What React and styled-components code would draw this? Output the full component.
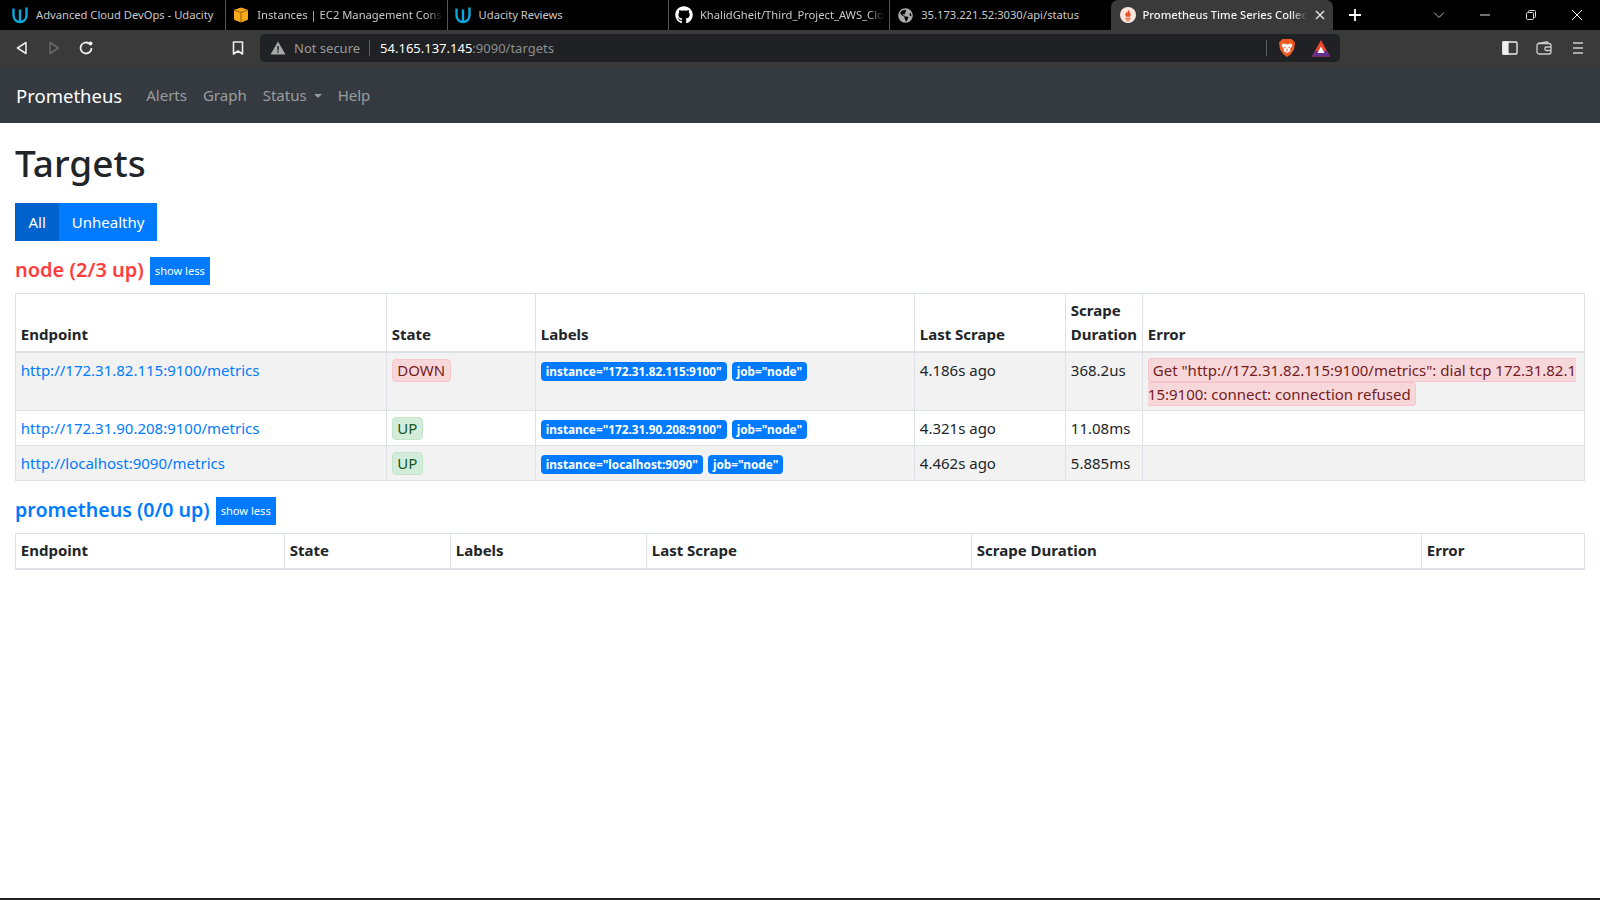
import React from "react";
import styled, { createGlobalStyle } from "styled-components";
import { FaGithub, FaGlobeAmericas } from "react-icons/fa";

const UI_FONT = '"Noto Sans", "Open Sans", sans-serif';

const GlobalStyle = createGlobalStyle`
  html, body {
    margin: 0;
    padding: 0;
    background: #fff;
  }
  body {
    font-family: ${UI_FONT};
    font-size: 15px;
    line-height: 24px;
    color: #212529;
  }
  * {
    box-sizing: border-box;
  }
`;

const Page = styled.div`
  width: 1600px;
  height: 900px;
  display: flex;
  flex-direction: column;
  overflow: hidden;
`;

/* browser chrome */

const TabStrip = styled.div`
  height: 30px;
  flex: none;
  background: #000;
  display: flex;
  align-items: stretch;
  padding-left: 5px;
`;

const Tab = styled.div`
  width: 221.3px;
  flex: none;
  display: flex;
  align-items: center;
  gap: ${({ $active }) => ($active ? "5px" : "7px")};
  padding: 0 ${({ $active }) => ($active ? "7px" : "4px")} 0 ${({ $active }) => ($active ? "8px" : "6px")};
  background: ${({ $active }) => ($active ? "#3a3a3a" : "transparent")};
  border-radius: ${({ $active }) => ($active ? "7px 7px 0 0" : "0")};
  border-right: ${({ $sep }) => ($sep ? "1px solid #555" : "1px solid transparent")};
  color: ${({ $active }) => ($active ? "#f2f2f2" : "#c9c9c9")};
  font-weight: ${({ $active }) => ($active ? 500 : 400)};
`;

const TabIcon = styled.span`
  width: 18px;
  height: 18px;
  flex: none;
  display: flex;
  align-items: center;
  justify-content: center;
`;

const TabTitle = styled.span`
  flex: 1;
  min-width: 0;
  font-size: 11.2px;
  line-height: 16px;
  white-space: nowrap;
  overflow: hidden;
  ${({ $fade }) =>
    $fade
      ? "mask-image: linear-gradient(to right, #000 calc(100% - 16px), transparent);"
      : ""}
`;

const TabClose = styled.svg`
  width: 10px;
  height: 10px;
  flex: none;
  margin-left: 3px;
`;

const NewTab = styled.svg`
  width: 14px;
  height: 14px;
  flex: none;
  margin: 8px 0 0 15px;
`;

const WindowControls = styled.div`
  margin-left: auto;
  display: flex;
  align-items: center;
  padding-right: 16px;
  gap: 32px;
`;

const WindowIcon = styled.svg`
  width: 14px;
  height: 14px;
  display: block;
`;

const Toolbar = styled.div`
  height: 37px;
  flex: none;
  background: #3a3a3a;
  display: flex;
  align-items: center;
  padding: 0 14px 1px 14px;
`;

const ToolIcon = styled.svg`
  width: 16px;
  height: 16px;
  flex: none;
  margin-right: ${({ $gap }) => $gap || 0}px;
`;

const AddressBar = styled.div`
  width: 1080px;
  height: 28px;
  flex: none;
  margin: 0 162px 0 14px;
  background: #202124;
  border-radius: 5px;
  display: flex;
  align-items: center;
  padding: 0 10px;
  font-size: 13px;
  line-height: 16px;
`;

const NotSecure = styled.span`
  color: #9a9a9a;
  margin-left: 8px;
  white-space: nowrap;
`;

const BarSep = styled.span`
  width: 1px;
  height: 16px;
  background: #5f5f5f;
  flex: none;
  margin: ${({ $margin }) => $margin};
`;

const Url = styled.span`
  color: #8e8e8e;
  white-space: nowrap;
  b {
    color: #fff;
    font-weight: 400;
  }
`;

const Shield = styled.svg`
  width: 18px;
  height: 20px;
  flex: none;
  margin-left: 11px;
`;

const Bat = styled.svg`
  width: 18px;
  height: 17px;
  flex: none;
  margin-left: 16px;
`;

/* prometheus navbar */

const Navbar = styled.nav`
  height: 56px;
  flex: none;
  background: #343a40;
  display: flex;
  align-items: center;
  padding: 0 16px;
`;

const Brand = styled.a`
  color: #fff;
  font-size: 18.5px;
  line-height: 30px;
  padding-top: 2px;
  margin-right: 16px;
`;

const NavLink = styled.a`
  color: rgba(255, 255, 255, 0.5);
  padding: 0 8px;
  white-space: nowrap;
`;

const Caret = styled.span`
  display: inline-block;
  margin-left: 7px;
  vertical-align: 3px;
  border-top: 4.8px solid;
  border-left: 4.8px solid transparent;
  border-right: 4.8px solid transparent;
`;

/* page */

const Content = styled.main`
  flex: 1;
  padding: 16px 15px 0;
  background: #fff;
`;

const BottomEdge = styled.div`
  height: 2px;
  flex: none;
  background: #202020;
`;

const Title = styled.h1`
  margin: 0 0 16px;
  font-size: 37px;
  line-height: 48px;
  font-weight: 500;
`;

const FilterGroup = styled.div`
  display: inline-flex;
  vertical-align: top;
`;

const FilterButton = styled.button`
  height: 38px;
  padding: 0 ${({ $active }) => ($active ? "13.5px" : "12.5px")};
  border: 0;
  color: #fff;
  font: inherit;
  background: ${({ $active }) => ($active ? "#0062cc" : "#007bff")};
`;

const PoolHeading = styled.div`
  display: flex;
  align-items: center;
  height: 28px;
  margin: 16px 0 8px;
`;

const PoolName = styled.a`
  color: ${({ $bad }) => ($bad ? "#ff3c3c" : "#007bff")};
  font-size: ${({ $bad }) => ($bad ? "20px" : "19.6px")};
  line-height: 26px;
  font-weight: 600;
  margin-right: 6px;
  padding-bottom: 2px;
`;

const SmallButton = styled.button`
  height: 28px;
  padding: 0 5px;
  border: 0;
  background: #007bff;
  color: #fff;
  font: inherit;
  font-size: 11.1px;
  line-height: 18px;
`;

const Table = styled.table`
  width: 1569px;
  table-layout: fixed;
  border-collapse: collapse;
`;

const Th = styled.th`
  padding: 3.8px 4.8px ${({ $single }) => ($single ? "5.8px" : "4.8px")};
  border: 1px solid #dee2e6;
  border-bottom: 2px solid #dee2e6;
  vertical-align: bottom;
  text-align: left;
  font-weight: 700;
`;

const Row = styled.tr`
  background: ${({ $odd }) => ($odd ? "#f2f2f2" : "#fff")};
`;

const Td = styled.td`
  padding: 5px 4.8px 4.8px;
  border: 1px solid #dee2e6;
  vertical-align: top;
`;

const Endpoint = styled.a`
  color: #007bff;
`;

const StateBadge = styled.span`
  display: inline-block;
  padding: 0 4.5px;
  line-height: 21px;
  border-radius: 4px;
  border: 1px solid ${({ $up }) => ($up ? "#c3e6cb" : "#f5c6cb")};
  background: ${({ $up }) => ($up ? "#d4edda" : "#f8d7da")};
  color: ${({ $up }) => ($up ? "#155724" : "#721c24")};
`;

const LabelList = styled.div`
  display: flex;
  gap: 5px;
  padding-top: 4px;
`;

const Label = styled.span`
  background: #007bff;
  color: #fff;
  font-size: 11.8px;
  font-weight: 700;
  line-height: 13px;
  padding: 3px 5px;
  border-radius: 4px;
  white-space: nowrap;
`;

const ErrorText = styled.span`
  background: #f8d7da;
  color: #721c24;
  border: 1px solid #f5c6cb;
  border-radius: 4px;
  padding: 1px 4px;
  white-space: nowrap;
`;

const UdacityIcon = () => (
  <svg width="18" height="18" viewBox="0 0 18 18" fill="none" stroke="#0aa8dc" strokeWidth="2.4">
    <path d="M2.5 2.500v7a6.500 6.500 0 0 0 13 0V1.500" />
    <path d="M9 3.500v11.500" />
  </svg>
);

const BoxIcon = () => (
  <svg width="18" height="18" viewBox="0 0 18 18">
    <path d="M9 2 15.500 4.200 V13.500 L9 16 2.500 13.500 V4.200z" fill="#f7a81b" stroke="#f7a81b" strokeWidth="1" strokeLinejoin="round" />
    <path d="M2.500 4.200 9 6.400l6.500-2.200M9 6.400V16" fill="none" stroke="#8a5a10" strokeWidth="0.9" />
  </svg>
);

const PrometheusIcon = () => (
  <svg width="16" height="16" viewBox="0 0 18 18">
    <circle cx="9" cy="9" r="9" fill="#fbe6dd" />
    <path d="M9 2.500c.5 2 3 3 3 6 0 1-.4 2-.8 2.600H6.800C6.400 10.500 6 9.500 6 8.500c0-1.500 1-2 1.300-3.200.6.500.8 1 1 1.500C8.800 5.500 9.200 4 9 2.500z" fill="#e6522c" />
    <path d="M6 12h6v1.200H6zM6.500 14h5l-1 1.500h-3z" fill="#e6522c" />
  </svg>
);

const Chevron = () => (
  <WindowIcon viewBox="0 0 14 14" fill="none" stroke="#bbb" strokeWidth="1">
    <path d="M2 4.500 7 9.500l5-5" />
  </WindowIcon>
);

const Minimize = () => (
  <WindowIcon viewBox="0 0 14 14" fill="none" stroke="#ddd" strokeWidth="1">
    <path d="M2 7h10" />
  </WindowIcon>
);

const Restore = () => (
  <WindowIcon viewBox="0 0 14 14" fill="none" stroke="#ddd" strokeWidth="1">
    <rect x="2.500" y="4.500" width="7" height="7" rx="1" />
    <path d="M4.500 4.500V3.500a1 1 0 0 1 1-1h5a1 1 0 0 1 1 1v5a1 1 0 0 1-1 1h-1" />
  </WindowIcon>
);

const CloseWindow = () => (
  <WindowIcon viewBox="0 0 14 14" fill="none" stroke="#eee" strokeWidth="1">
    <path d="m2 2 10 10M12 2 2 12" />
  </WindowIcon>
);

const tabs = [
  { title: "Advanced Cloud DevOps - Udacity", icon: <UdacityIcon />, sep: true },
  { title: "Instances | EC2 Management Console", icon: <BoxIcon />, sep: true, fade: true },
  { title: "Udacity Reviews", icon: <UdacityIcon />, sep: true },
  { title: "KhalidGheit/Third_Project_AWS_Cloud", icon: <FaGithub size={18} color="#fff" />, sep: true, fade: true },
  { title: "35.173.221.52:3030/api/status", icon: <FaGlobeAmericas size={15} color="#aaa" /> },
];

const firstCols = [371, 149, 379, 151, 77, 442];
const secondCols = [269, 166, 196, 325, 450, 163];
const headers = ["Endpoint", "State", "Labels", "Last Scrape", "Scrape Duration", "Error"];

const targets = [
  {
    url: "http://172.31.82.115:9100/metrics",
    up: false,
    instance: "172.31.82.115:9100",
    last: "4.186s ago",
    duration: "368.2us",
    error: true,
  },
  {
    url: "http://172.31.90.208:9100/metrics",
    up: true,
    instance: "172.31.90.208:9100",
    last: "4.321s ago",
    duration: "11.08ms",
  },
  {
    url: "http://localhost:9090/metrics",
    up: true,
    instance: "localhost:9090",
    last: "4.462s ago",
    duration: "5.885ms",
  },
];

const Head = ({ cols, single }) => (
  <>
    <colgroup>
      {cols.map((width, i) => (
        <col key={i} width={width} />
      ))}
    </colgroup>
    <thead>
      <tr>
        {headers.map((h) => (
          <Th key={h} $single={single}>
            {h}
          </Th>
        ))}
      </tr>
    </thead>
  </>
);

const App = () => {
  return (
    <Page>
      <GlobalStyle />
      <TabStrip>
        {tabs.map((tab) => (
          <Tab key={tab.title} $sep={tab.sep}>
            <TabIcon>{tab.icon}</TabIcon>
            <TabTitle $fade={tab.fade}>{tab.title}</TabTitle>
          </Tab>
        ))}
        <Tab $active>
          <TabIcon>
            <PrometheusIcon />
          </TabIcon>
          <TabTitle $fade>Prometheus Time Series Collection</TabTitle>
          <TabClose viewBox="0 0 10 10" fill="none" stroke="#ddd" strokeWidth="1.5">
            <path d="m1 1 8 8M9 1 1 9" />
          </TabClose>
        </Tab>
        <NewTab viewBox="0 0 14 14" fill="none" stroke="#fff" strokeWidth="1.8">
          <path d="M7 1v12M1 7h12" />
        </NewTab>
        <WindowControls>
          <Chevron />
          <Minimize />
          <Restore />
          <CloseWindow />
        </WindowControls>
      </TabStrip>

      <Toolbar>
        <ToolIcon $gap={16} viewBox="0 0 16 16" fill="none" stroke="#eee" strokeWidth="1.5" strokeLinejoin="round">
          <path d="M12 2.500v11L3.500 8z" />
        </ToolIcon>
        <ToolIcon $gap={16} viewBox="0 0 16 16" fill="none" stroke="#666" strokeWidth="1.5" strokeLinejoin="round">
          <path d="M4 2.500v11L12.500 8z" />
        </ToolIcon>
        <ToolIcon $gap={136} viewBox="0 0 16 16" fill="none" stroke="#eee" strokeWidth="1.8">
          <path d="M13.500 8a5.500 5.500 0 1 1-2.500-4.600" />
          <circle cx="12.500" cy="3.500" r="2" fill="#eee" stroke="none" />
        </ToolIcon>
        <ToolIcon viewBox="0 0 16 16" fill="none" stroke="#eee" strokeWidth="1.6" strokeLinejoin="round">
          <path d="M3.500 2h9v12L8 11l-4.500 3z" />
        </ToolIcon>
        <AddressBar>
          <ToolIcon viewBox="0 0 16 16">
            <path d="M8 1.500 15.500 14.500H.5z" fill="#a9a9a9" />
            <path d="M7.300 6h1.400v4.500H7.300zM7.300 11.300h1.400v1.400H7.300z" fill="#202124" />
          </ToolIcon>
          <NotSecure>Not secure</NotSecure>
          <BarSep $margin="0 10px 0 9px" />
          <Url>
            <b>54.165.137.145</b>:9090/targets
          </Url>
          <BarSep $margin="0 0 0 auto" />
          <Shield viewBox="0 0 18 20">
            <path d="M4.500 1h9l2.500 2.500 1 1-1 7-3.500 5L9 19l-3.500-2.500-3.500-5-1-7 1-1z" fill="#f15a22" />
            <path d="M5 5.500 9 6.500l4-1 1.500 2-2.500 3.500.5 2L9 15l-3.500-2 .5-2L3.500 7.500z" fill="#fff" />
            <path d="M7.500 9.500H6.200M11.800 9.500h-1.300M9 10.500v3" stroke="#f15a22" strokeWidth="1" />
          </Shield>
          <Bat viewBox="0 0 18 17">
            <path d="M9 0 18 16.500H0z" fill="#e9472e" />
            <path d="M0 16.500 3 11l6-0.500 6 .5 3 5.500z" fill="#662d91" />
            <path d="M9 6.500 12.500 13h-7z" fill="#fff" />
          </Bat>
        </AddressBar>
        <ToolIcon $gap={18} viewBox="0 0 16 16" fill="none" stroke="#eee" strokeWidth="1.3">
          <rect x="1" y="2" width="14" height="12" rx="1" />
          <path d="M1 2h5v12H1z" fill="#eee" />
        </ToolIcon>
        <ToolIcon $gap={18} viewBox="0 0 16 16" fill="none" stroke="#ccc" strokeWidth="1.3">
          <rect x="1" y="3.500" width="14" height="10.500" rx="2" />
          <path d="M2 3.500 11 1.800l1.500 1.700M15 7h-4.500a1.500 1.500 0 0 0 0 3.500H15" />
        </ToolIcon>
        <ToolIcon viewBox="0 0 16 16" fill="none" stroke="#ccc" strokeWidth="1.6">
          <path d="M3 3h10M3 8h10M3 13h10" />
        </ToolIcon>
      </Toolbar>

      <Navbar>
        <Brand>Prometheus</Brand>
        <NavLink>Alerts</NavLink>
        <NavLink>Graph</NavLink>
        <NavLink>
          Status
          <Caret />
        </NavLink>
        <NavLink>Help</NavLink>
      </Navbar>

      <Content>
        <Title>Targets</Title>
        <FilterGroup>
          <FilterButton $active>All</FilterButton>
          <FilterButton>Unhealthy</FilterButton>
        </FilterGroup>

        <PoolHeading>
          <PoolName $bad>node (2/3 up)</PoolName>
          <SmallButton>show less</SmallButton>
        </PoolHeading>
        <Table>
          <Head cols={firstCols} />
          <tbody>
            {targets.map((t, i) => (
              <Row key={t.url} $odd={i % 2 === 0}>
                <Td>
                  <Endpoint>{t.url}</Endpoint>
                </Td>
                <Td>
                  <StateBadge $up={t.up}>{t.up ? "UP" : "DOWN"}</StateBadge>
                </Td>
                <Td>
                  <LabelList>
                    <Label>instance="{t.instance}"</Label>
                    <Label>job="node"</Label>
                  </LabelList>
                </Td>
                <Td>{t.last}</Td>
                <Td>{t.duration}</Td>
                <Td>
                  {t.error && (
                    <ErrorText>
                      Get "http://172.31.82.115:9100/metrics": dial tcp 172.31.82.1
                      <br />
                      15:9100: connect: connection refused
                    </ErrorText>
                  )}
                </Td>
              </Row>
            ))}
          </tbody>
        </Table>

        <PoolHeading>
          <PoolName>prometheus (0/0 up)</PoolName>
          <SmallButton>show less</SmallButton>
        </PoolHeading>
        <Table>
          <Head cols={secondCols} single />
        </Table>
      </Content>
      <BottomEdge />
    </Page>
  );
};

export default App;
